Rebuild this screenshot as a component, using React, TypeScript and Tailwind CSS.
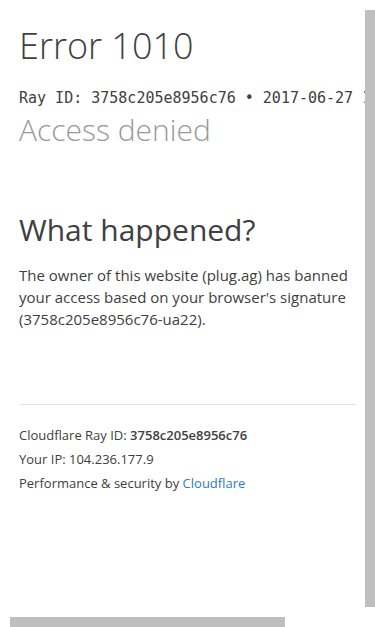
import React from 'react';

const App: React.FC = () => {
  return (
    <div className="relative w-[375px] h-[627px] overflow-hidden bg-white text-[#404040]" style={{ fontFamily: '"Open Sans", sans-serif' }}>
      <div className="pl-[19px] pt-[22px] w-[700px]">
        <h1 className="text-[36px] leading-[48px] font-light">Error 1010</h1>
        <div className="mt-[17px] text-[15px] leading-[22px] whitespace-nowrap" style={{ fontFamily: '"DejaVu Sans Mono", monospace' }}>
          Ray ID: 3758c205e8956c76 &bull; 2017-06-27 13:06:15 UTC
        </div>
        <h2 className="mt-[1px] text-[30px] leading-[40px] font-light text-[#999999]">Access denied</h2>
      </div>

      <div className="pl-[19px] w-[356px]">
        <h2 className="mt-[60px] text-[30px] leading-[40px] font-normal">What happened?</h2>
        <p className="mt-[14px] text-[15px] leading-[22px]">
          The owner of this website (plug.ag) has banned your access based on your browser's signature (3758c205e8956c76-ua22).
        </p>

        <div className="mt-[74px] border-t border-[#e6e6e6]" />

        <div className="mt-[18px] text-[13px] leading-[24px]">
          <p>
            Cloudflare Ray ID: <strong className="font-semibold">3758c205e8956c76</strong>
          </p>
          <p>Your IP: 104.236.177.9</p>
          <p>
            Performance &amp; security by <a href="#" className="text-[#2f7bbf]">Cloudflare</a>
          </p>
        </div>
      </div>

      {/* scrollbars */}
      <div className="absolute right-0 top-[10px] w-[10px] h-[597px] bg-[#bfbfbf]" />
      <div className="absolute left-[10px] bottom-0 w-[275px] h-[10px] bg-[#bfbfbf]" />
    </div>
  );
};

export default App;
